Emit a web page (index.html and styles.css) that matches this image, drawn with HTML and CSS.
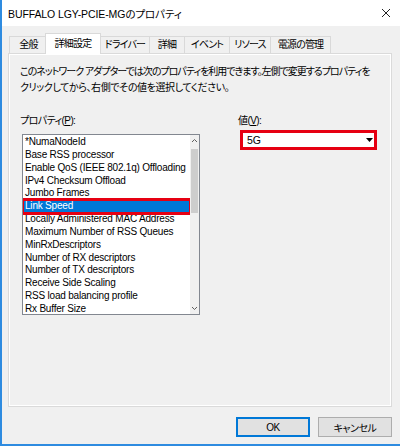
FILE: index.html
```html
<!DOCTYPE html>
<html lang="ja">
<head>
  <meta charset="UTF-8" />
  <title>BUFFALO LGY-PCIE-MGのプロパティ</title>
  <link rel="stylesheet" href="styles.css">
</head>
<body>

<div class="window">
  <!-- Title bar -->
  <div class="titlebar">
    <span class="title">BUFFALO LGY-PCIE-MGのプロパティ</span>
    <svg class="close" width="10" height="10" viewBox="0 0 10 10">
      <path d="M1 1 L9 9 M9 1 L1 9" stroke="#222" stroke-width="1" fill="none"/>
    </svg>
  </div>

  <div class="content">
    <!-- Tabs -->
    <div class="tabs">
      <div class="tab w-general">全般</div>
      <div class="tab active w-advanced">詳細設定</div>
      <div class="tab w-driver">ドライバー</div>
      <div class="tab w-details">詳細</div>
      <div class="tab w-events">イベント</div>
      <div class="tab w-resources">リソース</div>
      <div class="tab w-power">電源の管理</div>
    </div>

    <div class="panel">
      <p class="desc">このネットワーク アダプターでは次のプロパティを利用できます。左側で変更するプロパティを<br><span class="second">クリックしてから、右側でその値を選択してください。</span></p>

      <div class="cols">
        <div class="col-left">
          <div class="label">プロパティ(<u>P</u>):</div>
          <div class="listbox">
            <ul class="items">
              <li>*NumaNodeId</li>
              <li>Base RSS processor</li>
              <li>Enable QoS (IEEE 802.1q) Offloading</li>
              <li>IPv4 Checksum Offload</li>
              <li>Jumbo Frames</li>
              <li class="selected">Link Speed</li>
              <li>Locally Administered MAC Address</li>
              <li>Maximum Number of RSS Queues</li>
              <li>MinRxDescriptors</li>
              <li>Number of RX descriptors</li>
              <li>Number of TX descriptors</li>
              <li>Receive Side Scaling</li>
              <li>RSS load balancing profile</li>
              <li>Rx Buffer Size</li>
            </ul>
            <div class="scrollbar">
              <svg class="arrow" width="9" height="8" viewBox="0 0 9 8">
                <path d="M2 5 L4.5 2.5 L7 5" stroke="#606060" stroke-width="1" fill="none"/>
              </svg>
              <div class="track"><div class="thumb"></div></div>
              <svg class="arrow" width="9" height="8" viewBox="0 0 9 8">
                <path d="M2 3 L4.5 5.5 L7 3" stroke="#606060" stroke-width="1" fill="none"/>
              </svg>
            </div>
          </div>
        </div>

        <div class="col-right">
          <div class="label">値(<u>V</u>):</div>
          <div class="combo">
            <span>5G</span>
            <svg width="7" height="4" viewBox="0 0 7 4">
              <path d="M0 0 L7 0 L3.5 4 Z" fill="#000"/>
            </svg>
          </div>
        </div>
      </div>
    </div>

    <div class="buttons">
      <button class="btn default">OK</button>
      <button class="btn">キャンセル</button>
    </div>
  </div>
</div>

</body>
</html>
```

FILE: styles.css
```css
body {
  margin: 0;
  padding: 0;
  font-family: "Liberation Sans", "Noto Sans CJK JP", sans-serif;
  font-size: 10px;
  font-feature-settings: "palt";
  color: #000;
  background: #f0f0f0;
}
.window {
  width: 400px;
  height: 446px;
  box-sizing: border-box;
  border-left: 2px solid #2e8be0;
  border-bottom: 2px solid #2e8be0;
  background: #f0f0f0;
}
.titlebar {
  height: 26px;
  background: #fff;
  display: flex;
  align-items: center;
  justify-content: space-between;
  padding: 0 8px 0 6px;
}
.title {
  font-size: 10.5px;
  letter-spacing: -0.1px;
}
.close {
  margin-right: 1px;
}
.content {
  padding: 0 8px 0 6px;
}
.tabs {
  display: flex;
  align-items: flex-end;
  height: 20px;
  margin-top: 7px;
  padding-left: 1px;
}
.tab {
  height: 17px;
  line-height: 16px;
  box-sizing: border-box;
  text-align: center;
  letter-spacing: -0.8px;
  white-space: nowrap;
  border: 1px solid #d9d9d9;
  border-bottom: none;
  margin-right: -1px;
  background: #f0f0f0;
}
.tab.active {
  height: 21px;
  line-height: 20px;
  margin: 0 -1px -1px -2px;
  background: #fff;
  position: relative;
  z-index: 1;
}
.w-general { width: 39px; }
.w-advanced { width: 56px; }
.w-driver { width: 50px; }
.w-details { width: 36px; }
.w-events { width: 46px; }
.w-resources { width: 42px; }
.w-power { width: 61px; }
.panel {
  height: 354px;
  box-sizing: border-box;
  border: 1px solid #dadada;
  box-shadow: inset 0 0 0 1px #fff;
  padding: 10px 10px 0 11px;
}
.desc {
  margin: 0;
  line-height: 15.5px;
  letter-spacing: -1px;
  white-space: nowrap;
}
.desc .second {
  letter-spacing: -0.4px;
}
.cols {
  display: flex;
  margin-top: 19px;
}
.label {
  line-height: 13px;
  height: 13px;
  letter-spacing: -0.6px;
}
.col-left {
  width: 190px;
}
.listbox {
  display: flex;
  width: 178px;
  height: 181px;
  margin: 7px 0 0 2px;
  box-sizing: border-box;
  border: 1px solid #828790;
  background: #fff;
}
.items {
  list-style: none;
  margin: 0;
  padding: 1px 0 0 0;
  flex: 1;
  overflow: hidden;
}
.items li {
  line-height: 12.85px;
  height: 12.85px;
  padding-left: 2px;
  letter-spacing: -0.2px;
  white-space: nowrap;
}
.items li.selected {
  background: #0078d7;
  color: #fff;
  outline: 3px solid #e60012;
  outline-offset: -1px;
  position: relative;
}
.scrollbar {
  width: 9px;
  display: flex;
  flex-direction: column;
  background: #f0f0f0;
}
.arrow {
  display: block;
  margin-top: 2px;
}
.scrollbar .arrow:last-child {
  margin: 0 0 2px 0;
}
.track {
  flex: 1;
  padding-top: 4px;
}
.thumb {
  height: 64px;
  margin: 0 1px;
  background: #cdcdcd;
}
.col-right {
  margin-left: 30px;
}
.col-right .label {
  margin-left: -2px;
}
.combo {
  width: 137px;
  height: 20px;
  box-sizing: border-box;
  margin-top: 3px;
  border: 3px solid #e60012;
  background: #fff;
  display: flex;
  align-items: center;
  justify-content: space-between;
  padding: 0 1px 0 4px;
}
.combo span {
  font-size: 10.5px;
}
.buttons {
  display: flex;
  justify-content: flex-end;
  gap: 8px;
  margin-top: 10px;
}
.btn {
  width: 74px;
  height: 20px;
  padding: 0;
  font-family: "Liberation Sans", "Noto Sans CJK JP", sans-serif;
  font-size: 10px;
  font-feature-settings: "palt";
  letter-spacing: -0.5px;
  background: #e1e1e1;
  border: 1px solid #adadad;
  color: #000;
}
.btn.default {
  border: 1px solid #0078d7;
  box-shadow: inset 0 0 0 1px #0078d7;
}
```
